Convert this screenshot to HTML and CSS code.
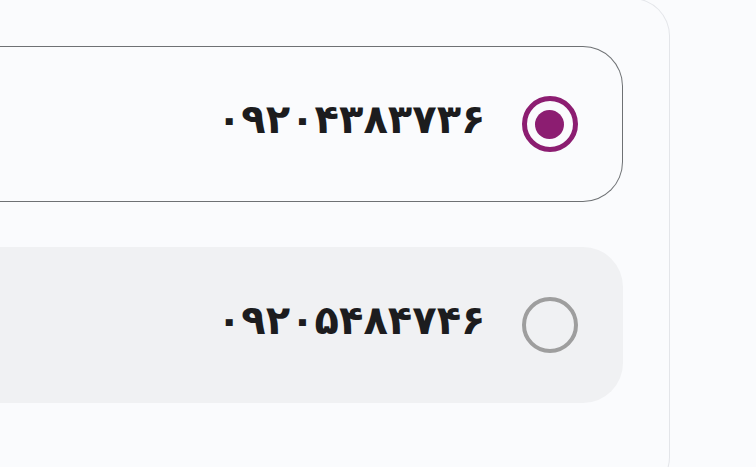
FILE: index.html
```html
<!DOCTYPE html>
<html lang="fa" dir="rtl">
<head>
<meta charset="utf-8">
<link rel="stylesheet" href="styles.css">
</head>
<body>
<div class="viewport">
  <div class="card">
    <label class="option selected">
      <span class="radio"><span class="dot"></span></span>
      <span class="number">۰۹۲۰۴۳۸۳۷۳۶</span>
    </label>
    <label class="option">
      <span class="radio"></span>
      <span class="number">۰۹۲۰۵۴۸۴۷۴۶</span>
    </label>
  </div>
</div>
</body>
</html>
```
FILE: styles.css
```css
html, body {
  margin: 0;
  padding: 0;
  background: #fafbfd;
}
.viewport {
  height: 467px;
  overflow: hidden;
}
.card {
  direction: rtl;
  margin: -2px 86px 0 0;
  border: 1px solid #e3e5e9;
  border-left: none;
  border-radius: 0 38px 38px 0;
  background: #fafbfd;
  padding: 47px 46px 91px 0;
  display: flex;
  flex-direction: column;
  gap: 45px;
}
.option {
  display: flex;
  align-items: center;
  gap: 36px;
  height: 156px;
  box-sizing: border-box;
  border-radius: 0 40px 40px 0;
  padding-right: 44.5px;
  border: 1.5px solid transparent;
  border-left: none;
  background: #f0f1f3;
}
.option.selected {
  background: #fafbfd;
  border-color: #6e7174;
}
.radio {
  width: 56px;
  height: 56px;
  box-sizing: border-box;
  border-radius: 50%;
  border: 4.5px solid #9e9e9e;
  display: flex;
  align-items: center;
  justify-content: center;
  flex: none;
}
.selected .radio {
  border: 5.5px solid #8c1d71;
}
.dot {
  width: 29px;
  height: 29px;
  border-radius: 50%;
  background: #8c1d71;
}
.number {
  font-family: "DejaVu Sans", sans-serif;
  font-weight: bold;
  font-size: 40px;
  line-height: 1;
  color: #1c1c1e;
  direction: ltr;
  unicode-bidi: isolate;
  margin-bottom: 10px;
}
```
